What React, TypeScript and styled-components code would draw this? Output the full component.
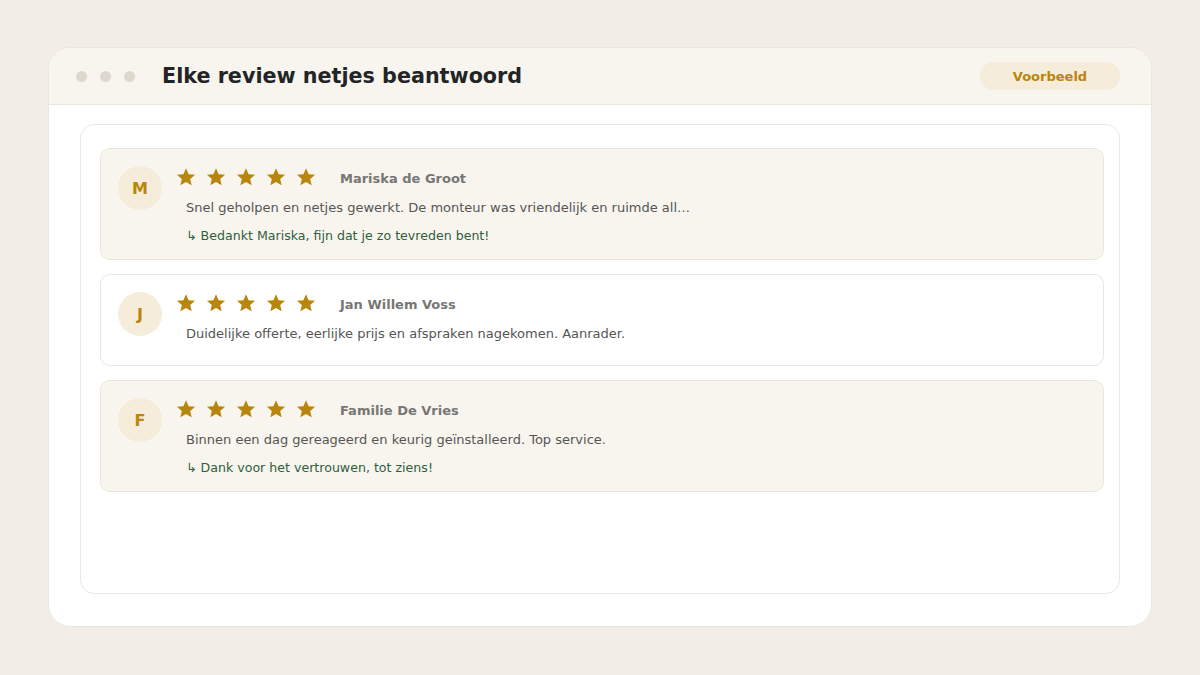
import styled, { createGlobalStyle } from "styled-components";

const GlobalStyle = createGlobalStyle`
  html, body {
    margin: 0;
    padding: 0;
    background: #f2ede6;
    font-family: "DejaVu Sans", Verdana, sans-serif;
  }
  * { box-sizing: border-box; }
`;

const Page = styled.div`
  width: 1200px;
  height: 675px;
  padding: 47px 48px 48px;
`;

const Window = styled.div`
  height: 580px;
  background: #fff;
  border: 1px solid #ebe7df;
  border-radius: 22px;
  overflow: hidden;
  display: flex;
  flex-direction: column;
`;

const TitleBar = styled.div`
  height: 57px;
  flex-shrink: 0;
  background: #f8f5ee;
  border-bottom: 1px solid #ebe7df;
  display: flex;
  align-items: center;
  padding: 0 31px 0 27px;
`;

const Dots = styled.div`
  display: flex;
  gap: 13px;
  margin-right: 27px;
`;

const Dot = styled.span`
  width: 11px;
  height: 11px;
  border-radius: 50%;
  background: #ddd8ce;
`;

const Title = styled.h1`
  margin: 0;
  font-size: 20.7px;
  font-weight: 700;
  color: #222426;
  flex: 1;
`;

const Badge = styled.span`
  width: 140px;
  height: 28px;
  border-radius: 14px;
  background: #f5ecda;
  color: #b8860b;
  font-size: 13px;
  font-weight: 700;
  display: flex;
  align-items: center;
  justify-content: center;
`;

const Panel = styled.div`
  margin: 19px 31px 32px;
  flex: 1;
  border: 1.5px solid #ebe8e2;
  border-radius: 14px;
  padding: 23px 15px 0 19px;
  display: flex;
  flex-direction: column;
  gap: 14px;
`;

const Card = styled.div<{ $tinted: boolean }>`
  background: ${(p) => (p.$tinted ? "#f8f5ee" : "#ffffff")};
  border: 1.5px solid #e9e6df;
  border-radius: 10px;
  padding: 17px 18px 13px 17px;
  display: flex;
  gap: 14px;
  align-items: flex-start;
`;

const Avatar = styled.div`
  width: 44px;
  height: 44px;
  border-radius: 50%;
  flex-shrink: 0;
  background: #f5ecda;
  color: #b8860b;
  font-size: 16px;
  font-weight: 700;
  display: flex;
  align-items: center;
  justify-content: center;
`;

const Body = styled.div`
  display: flex;
  flex-direction: column;
`;

const TopRow = styled.div`
  height: 22px;
  display: flex;
  align-items: center;
`;

const Stars = styled.div`
  display: flex;
  gap: 10px;
  margin-right: 24px;
`;

const Name = styled.span`
  font-size: 13px;
  font-weight: 700;
  color: #767774;
  margin-top: 2px;
`;

const Text = styled.p`
  margin: 10px 0 8px 10px;
  line-height: 20px;
  font-size: 13px;
  color: #555555;
`;

const Reply = styled.p`
  margin: 0 0 0 10px;
  line-height: 20px;
  font-size: 12.6px;
  color: #2f5e3f;
`;

const Star = () => (
  <svg width="20" height="20" viewBox="0 0 24 24">
    <path
      d="M12 1.5l3.1 7.2 7.8.6-5.9 5.1 1.8 7.6L12 18l-6.8 4 1.8-7.6-5.9-5.1 7.8-.6z"
      fill="#b8860b"
    />
  </svg>
);

type Review = {
  letter: string;
  name: string;
  text: string;
  reply?: string;
};

const reviews: Review[] = [
  {
    letter: "M",
    name: "Mariska de Groot",
    text: "Snel geholpen en netjes gewerkt. De monteur was vriendelijk en ruimde all…",
    reply: "Bedankt Mariska, fijn dat je zo tevreden bent!",
  },
  {
    letter: "J",
    name: "Jan Willem Voss",
    text: "Duidelijke offerte, eerlijke prijs en afspraken nagekomen. Aanrader.",
  },
  {
    letter: "F",
    name: "Familie De Vries",
    text: "Binnen een dag gereageerd en keurig geïnstalleerd. Top service.",
    reply: "Dank voor het vertrouwen, tot ziens!",
  },
];

export default function App() {
  return (
    <>
      <GlobalStyle />
      <Page>
        <Window>
          <TitleBar>
            <Dots>
              <Dot />
              <Dot />
              <Dot />
            </Dots>
            <Title>Elke review netjes beantwoord</Title>
            <Badge>Voorbeeld</Badge>
          </TitleBar>
          <Panel>
            {reviews.map((r) => (
              <Card key={r.name} $tinted={!!r.reply}>
                <Avatar>{r.letter}</Avatar>
                <Body>
                  <TopRow>
                    <Stars>
                      {[0, 1, 2, 3, 4].map((i) => (
                        <Star key={i} />
                      ))}
                    </Stars>
                    <Name>{r.name}</Name>
                  </TopRow>
                  <Text>{r.text}</Text>
                  {r.reply && <Reply>↳ {r.reply}</Reply>}
                </Body>
              </Card>
            ))}
          </Panel>
        </Window>
      </Page>
    </>
  );
}
